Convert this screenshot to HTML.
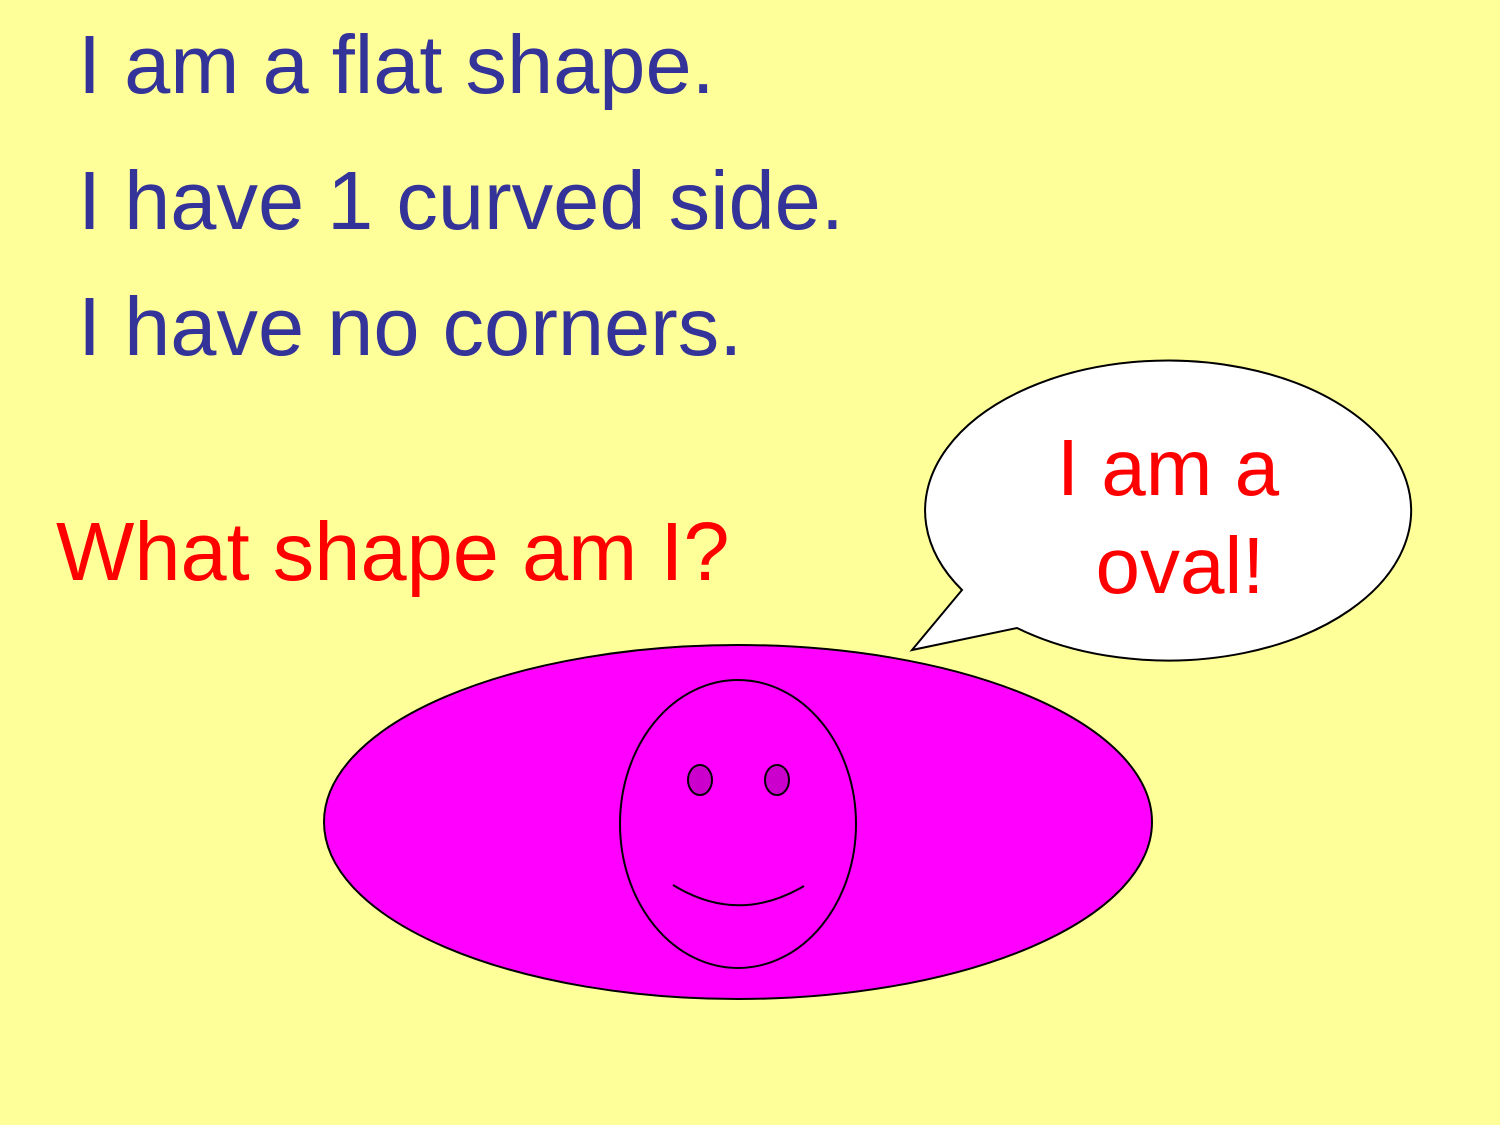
<!DOCTYPE html>
<html><head><style>
html,body{margin:0;padding:0;background:#FFFF99;}
svg{display:block;}
text{font-family:"Liberation Sans",Arial,sans-serif;}
</style></head><body>
<svg width="1500" height="1125" viewBox="0 0 1500 1125" xmlns="http://www.w3.org/2000/svg">
<rect width="1500" height="1125" fill="#FFFF99"/>
<g fill="#333399" font-size="83">
<text x="78" y="93">I am a flat shape.</text>
<text x="78" y="229">I have 1 curved side.</text>
<text x="78" y="355">I have no corners.</text>
</g>
<text x="56" y="580" fill="#FF0000" font-size="83">What shape am I?</text>
<path d="M1017,628 A243,150 0 1 0 962,590 L912,650 Z" fill="#fff" stroke="#000" stroke-width="2"/>
<text x="1168" y="495" fill="#FF0000" font-size="80" text-anchor="middle">I am a</text>
<text x="1180" y="593" fill="#FF0000" font-size="80" text-anchor="middle">oval!</text>
<ellipse cx="738" cy="822" rx="414" ry="177" fill="#FF00FF" stroke="#000" stroke-width="2"/>
<ellipse cx="738" cy="824" rx="118" ry="144" fill="#FF00FF" stroke="#000" stroke-width="2"/>
<ellipse cx="700" cy="780" rx="12" ry="15" fill="#CC00CC" stroke="#000" stroke-width="2"/>
<ellipse cx="777" cy="780" rx="12" ry="15" fill="#CC00CC" stroke="#000" stroke-width="2"/>
<path d="M673,885 Q738,925 804,886" fill="none" stroke="#000" stroke-width="2"/>
</svg>
</body></html>
